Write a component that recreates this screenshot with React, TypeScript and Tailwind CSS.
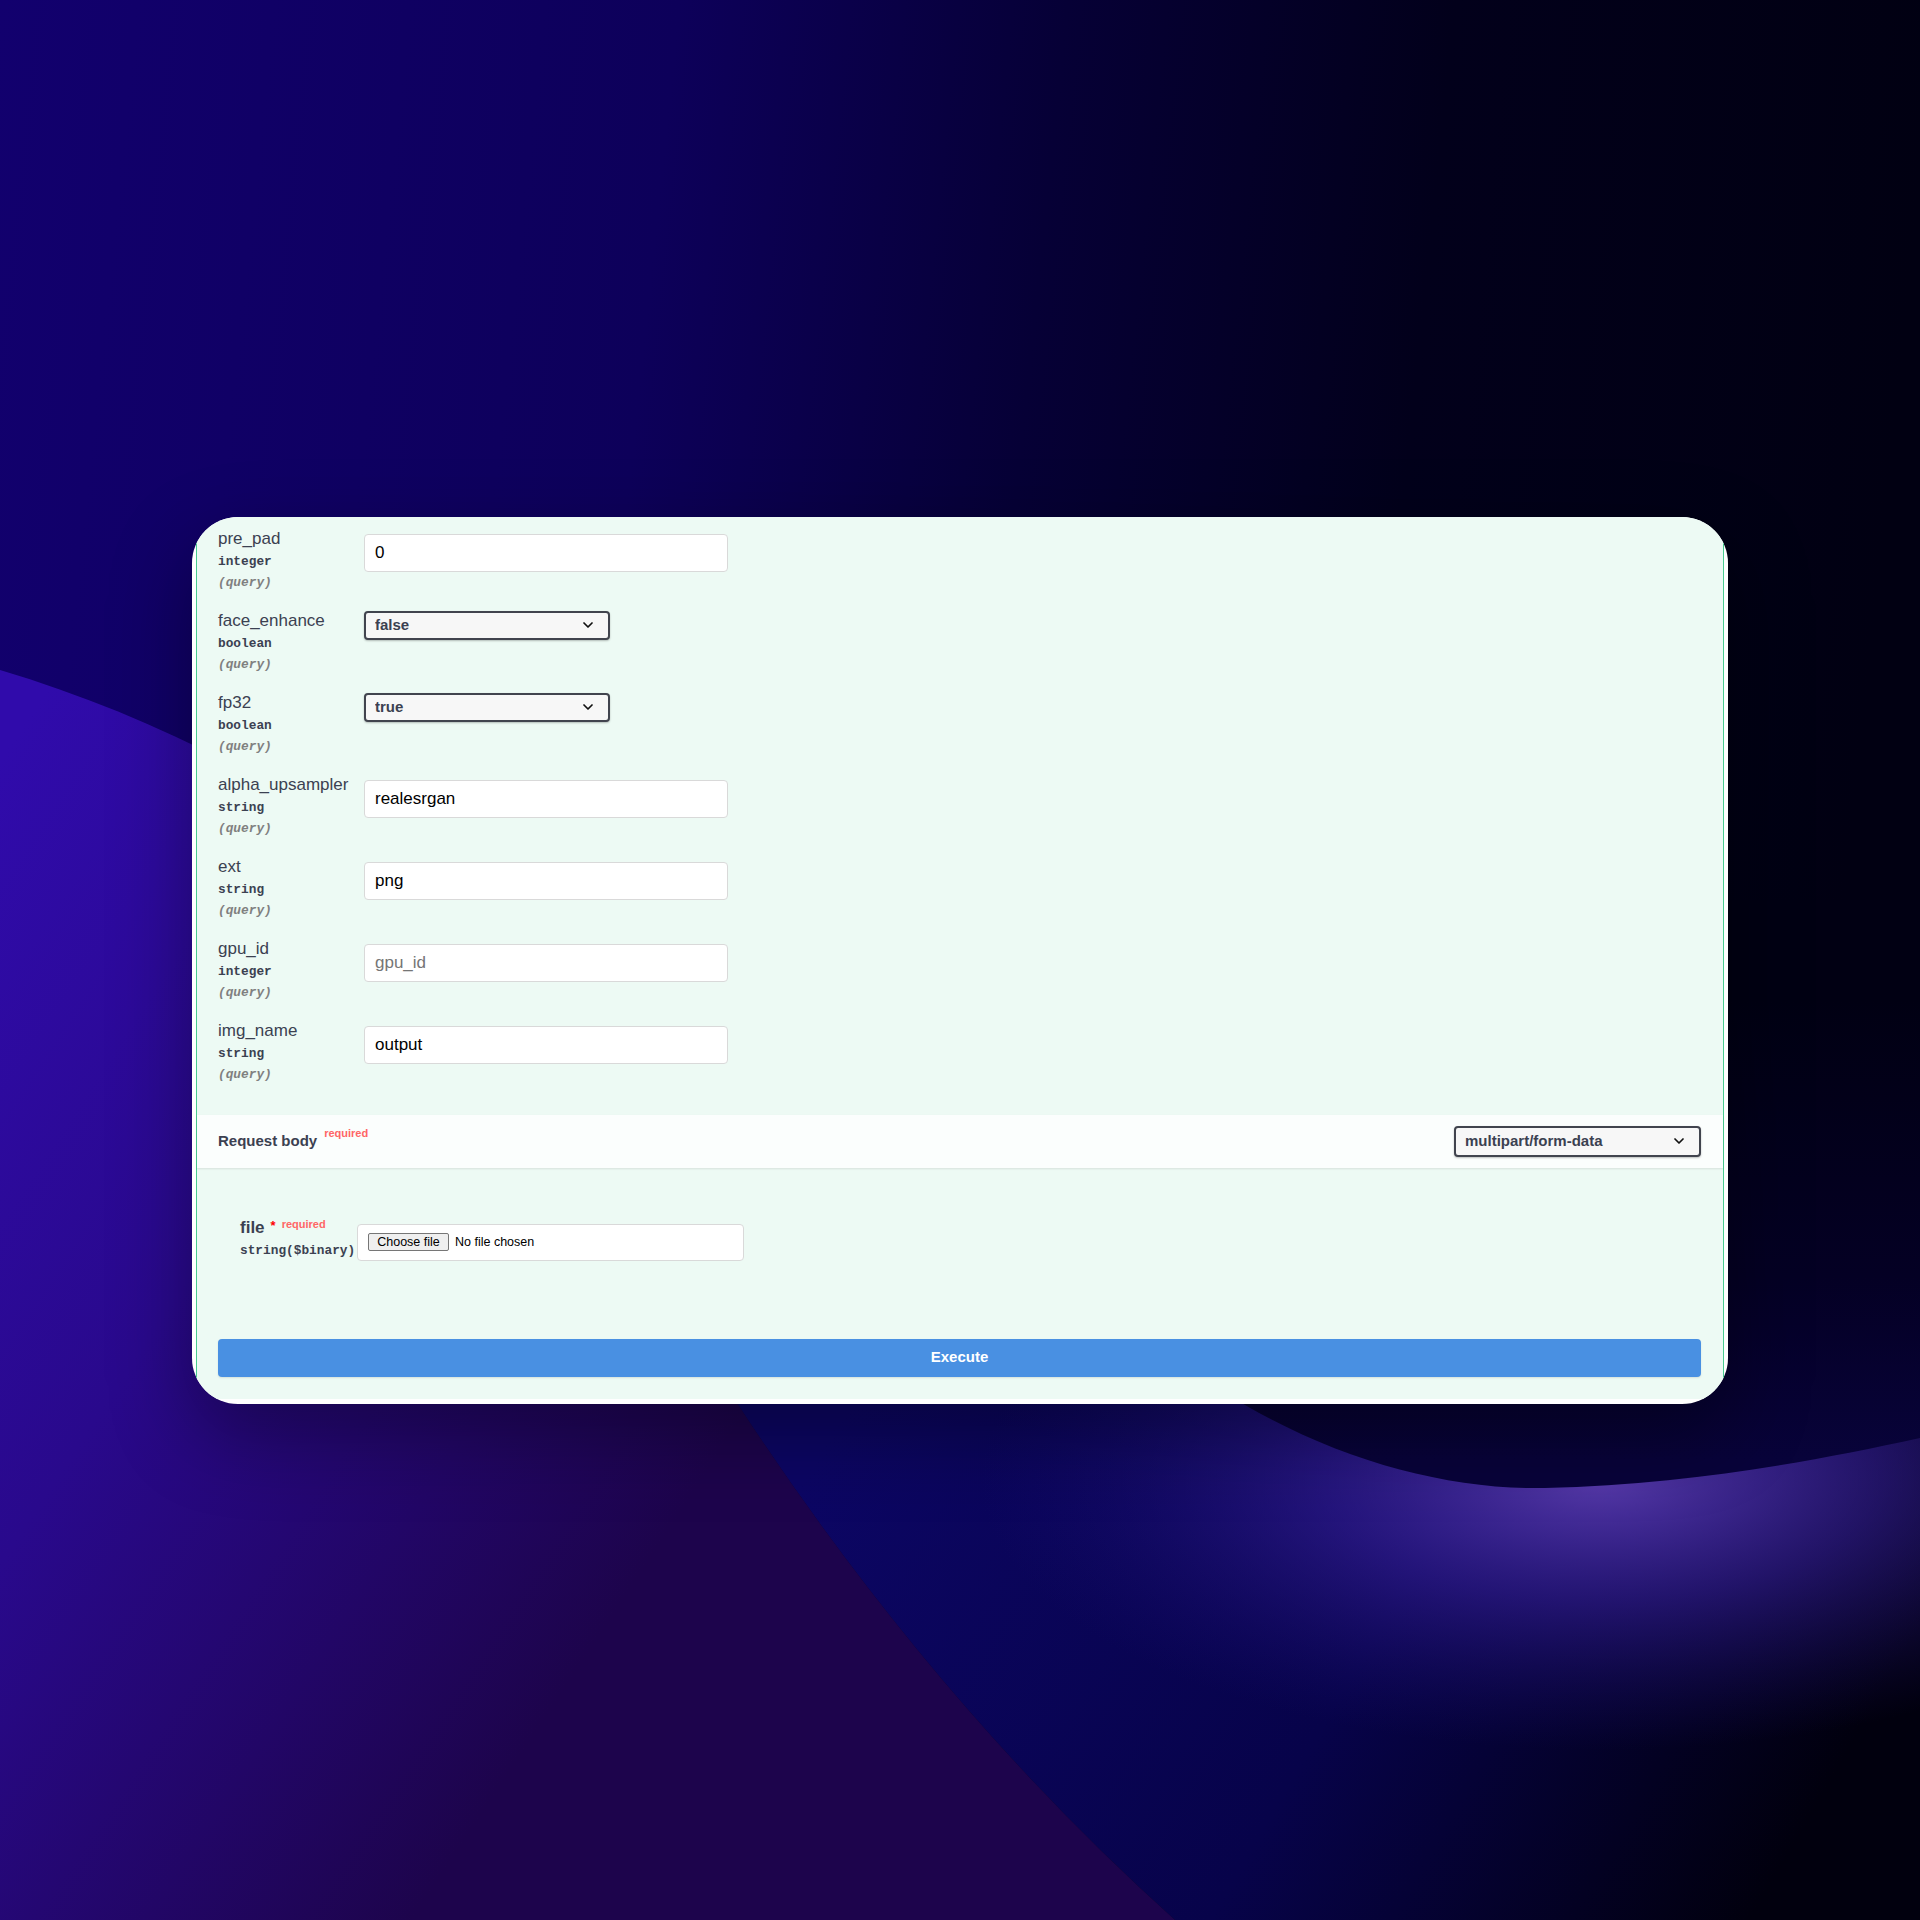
import { useState } from 'react';

type Param = {
    name: string;
    type: string;
    kind: 'input' | 'select';
    value?: string;
    placeholder?: string;
};

const params: Param[] = [
    { name: 'pre_pad', type: 'integer', kind: 'input', value: '0' },
    { name: 'face_enhance', type: 'boolean', kind: 'select', value: 'false' },
    { name: 'fp32', type: 'boolean', kind: 'select', value: 'true' },
    { name: 'alpha_upsampler', type: 'string', kind: 'input', value: 'realesrgan' },
    { name: 'ext', type: 'string', kind: 'input', value: 'png' },
    { name: 'gpu_id', type: 'integer', kind: 'input', placeholder: 'gpu_id' },
    { name: 'img_name', type: 'string', kind: 'input', value: 'output' },
];

function Chevron() {
    return (
        <svg
            className="pointer-events-none absolute top-1/2 -translate-y-1/2 right-[17px] w-[10px] h-[6px]"
            viewBox="0 0 10 6"
            fill="none"
            stroke="#111"
            strokeWidth="1.7"
            strokeLinecap="round"
            strokeLinejoin="round"
            aria-hidden
        >
            <path d="M1 1l4 4 4-4" />
        </svg>
    );
}

function SelectBox({
    options,
    value,
    className,
}: {
    options: string[];
    value: string;
    className: string;
}) {
    const [current, setCurrent] = useState(value);
    return (
        <div className={`relative ${className}`}>
            <select
                value={current}
                onChange={(e) => setCurrent(e.target.value)}
                className="appearance-none w-full h-full rounded-[4px] border-2 border-[#41444e] bg-[#f7f7f7] pl-[9px] pr-[34px] text-[15px] font-bold text-[#3b4151] shadow-[0_1px_2px_rgba(0,0,0,0.25)] outline-none"
            >
                {options.map((o) => (
                    <option key={o} value={o}>
                        {o}
                    </option>
                ))}
            </select>
            <Chevron />
        </div>
    );
}

function ParamRow({ param }: { param: Param }) {
    return (
        <div className="flex h-[82px]">
            <div className="w-[146px] shrink-0 pt-[11px]">
                <div className="text-[17px] leading-[22px] text-[#3b4151] whitespace-nowrap">
                    {param.name}
                </div>
                <div className="mt-[1px] font-['Liberation_Mono',monospace] text-[12.8px] leading-[22px] font-bold text-[#3b4151]">
                    {param.type}
                </div>
                <div className="font-['Liberation_Mono',monospace] text-[12.8px] leading-[20px] font-bold italic text-[#808080]">
                    (query)
                </div>
            </div>
            {param.kind === 'input' ? (
                <input
                    type="text"
                    defaultValue={param.value}
                    placeholder={param.placeholder}
                    className="mt-[17px] w-[364px] h-[38px] rounded-[4px] border border-[#d9d9d9] bg-white px-[10px] text-[17px] text-black placeholder:text-[#757575] outline-none"
                />
            ) : (
                <SelectBox
                    options={['--', 'true', 'false']}
                    value={param.value ?? '--'}
                    className="mt-[12px] w-[246px] h-[29px]"
                />
            )}
        </div>
    );
}

function Background() {
    return (
        <svg
            className="absolute inset-0 w-full h-full"
            viewBox="0 0 1920 1920"
            preserveAspectRatio="none"
            aria-hidden
        >
            <defs>
                <linearGradient id="bgBase" x1="0" y1="0" x2="1920" y2="200" gradientUnits="userSpaceOnUse">
                    <stop offset="0" stopColor="#12006e" />
                    <stop offset="0.35" stopColor="#0d005a" />
                    <stop offset="0.55" stopColor="#060036" />
                    <stop offset="0.75" stopColor="#02001b" />
                    <stop offset="1" stopColor="#010012" />
                </linearGradient>
                <linearGradient id="bgPurple" x1="0" y1="760" x2="820" y2="1300" gradientUnits="userSpaceOnUse">
                    <stop offset="0" stopColor="#300bab" />
                    <stop offset="0.45" stopColor="#29098c" />
                    <stop offset="1" stopColor="#1d044c" />
                </linearGradient>
                <linearGradient id="bgNavy" x1="850" y1="1400" x2="1750" y2="1920" gradientUnits="userSpaceOnUse">
                    <stop offset="0" stopColor="#0c0664" />
                    <stop offset="0.55" stopColor="#07034a" />
                    <stop offset="1" stopColor="#01000e" />
                </linearGradient>
                <linearGradient id="bgDark" x1="0" y1="1000" x2="0" y2="1460" gradientUnits="userSpaceOnUse">
                    <stop offset="0" stopColor="#010013" />
                    <stop offset="0.6" stopColor="#040024" />
                    <stop offset="1" stopColor="#08033a" />
                </linearGradient>
                <radialGradient id="bgGlow">
                    <stop offset="0" stopColor="#5b3db0" stopOpacity="0.95" />
                    <stop offset="0.45" stopColor="#3a22a0" stopOpacity="0.55" />
                    <stop offset="1" stopColor="#1d0f78" stopOpacity="0" />
                </radialGradient>
            </defs>
            <rect width="1920" height="1920" fill="url(#bgBase)" />
            <path d="M700,1300 L1920,1300 L1920,1920 L1175,1920 Q930,1700 735,1400 Z" fill="url(#bgNavy)" />
            <ellipse cx="1600" cy="1480" rx="620" ry="270" fill="url(#bgGlow)" />
            <path
                d="M1000,900 L1000,1150 C1120,1380 1360,1492 1545,1488 C1690,1484 1810,1462 1920,1438 L1920,900 Z"
                fill="url(#bgDark)"
            />
            <path
                d="M0,670 C300,760 560,950 680,1250 L735,1400 Q930,1700 1175,1920 L0,1920 Z"
                fill="url(#bgPurple)"
            />
        </svg>
    );
}

export default function App() {
    return (
        <div className="relative w-full h-[1920px] overflow-hidden flex items-center justify-center font-['Liberation_Sans',Arial,sans-serif]">
            <Background />
            <div className="relative w-[1536px] rounded-[46px] bg-white px-[4px] pb-[5px] overflow-hidden shadow-[0_30px_80px_rgba(0,0,0,0.35)]">
                <div className="bg-[#edfaf4] border-x border-[#49cc90]">
                    <div className="pl-[21px]">
                        {params.map((p) => (
                            <ParamRow key={p.name} param={p} />
                        ))}
                    </div>

                    <div className="mt-[24px] h-[53px] flex items-center justify-between pl-[21px] pr-[22px] bg-white/80 shadow-[0_1px_2px_rgba(0,0,0,0.1)]">
                        <div className="flex items-start text-[15px] font-bold text-[#3b4151]">
                            <span>Request body</span>
                            <span className="relative -top-[5px] ml-[7px] text-[11px] font-bold text-[#ff6666]">
                                required
                            </span>
                        </div>
                        <SelectBox
                            options={['multipart/form-data']}
                            value="multipart/form-data"
                            className="w-[247px] h-[31px]"
                        />
                    </div>

                    <div className="pt-[50px] pl-[43px] flex items-start">
                        <div className="w-[117px] shrink-0">
                            <div className="flex items-start leading-[20px] text-[#3b4151]">
                                <span className="text-[17px] font-bold">file</span>
                                <span className="ml-[6px] text-[13px] font-bold text-[#ff0000] leading-[16px]">*</span>
                                <span className="relative -top-[4px] ml-[6px] text-[11px] font-bold text-[#ff6666]">
                                    required
                                </span>
                            </div>
                            <div className="mt-[4px] font-['Liberation_Mono',monospace] text-[12.8px] leading-[18px] font-bold text-[#3b4151] whitespace-nowrap">
                                string($binary)
                            </div>
                        </div>
                        <div className="mt-[6px] w-[387px] h-[37px] rounded-[4px] border border-[#d9d9d9] bg-white pl-[10px] flex items-center gap-[6px] text-[12.5px] text-black">
                            <button
                                type="button"
                                className="h-[18px] w-[81px] rounded-[2px] border border-[#767676] bg-[#efefef] leading-none"
                            >
                                Choose file
                            </button>
                            <span>No file chosen</span>
                        </div>
                    </div>

                    <div className="pt-[78px] pb-[22px] pl-[21px] pr-[22px]">
                        <button
                            type="button"
                            className="w-full h-[38px] rounded-[4px] bg-[#4990e2] text-[15px] font-bold text-white shadow-[0_1px_2px_rgba(0,0,0,0.1)]"
                        >
                            Execute
                        </button>
                    </div>
                </div>
            </div>
        </div>
    );
}
